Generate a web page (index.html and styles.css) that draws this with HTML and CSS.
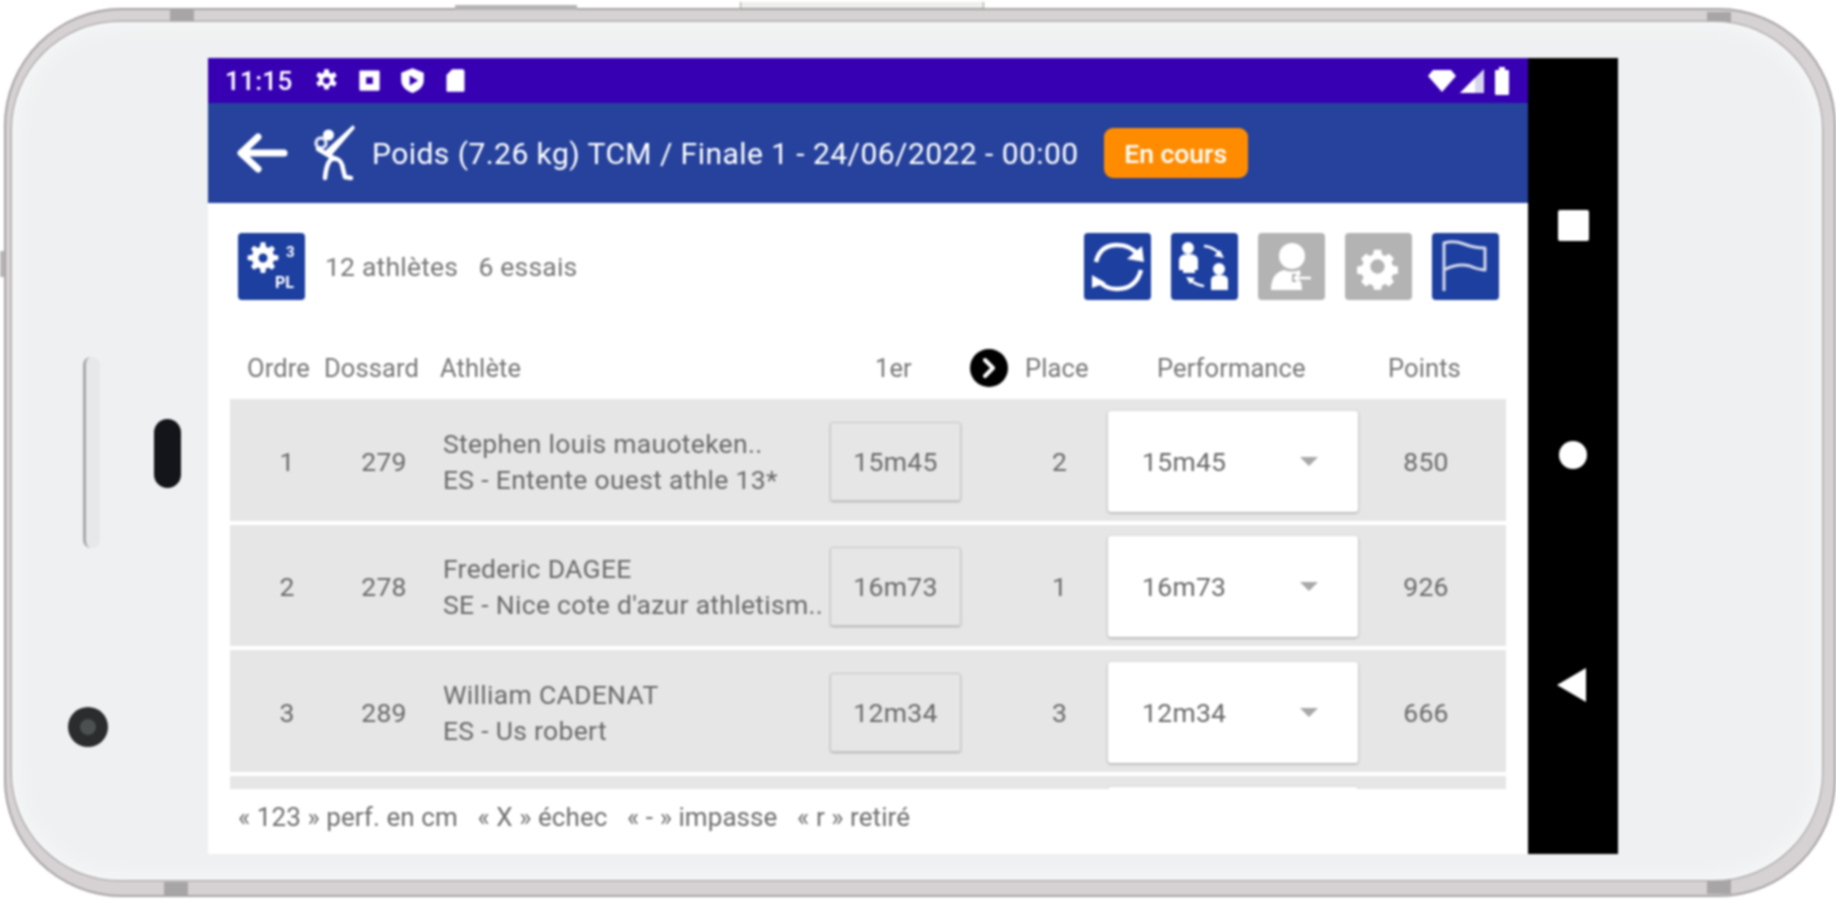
FILE: index.html
```html
<!DOCTYPE html>
<html lang="fr">
<head>
<meta charset="utf-8">
<title>Poids (7.26 kg) TCM</title>
<link rel="stylesheet" href="styles.css">
</head>
<body>
<div class="phone">
  <span class="hw hw-top-a"></span><span class="hw hw-top-b"></span>
  <span class="tab tab-tl"></span><span class="tab tab-tr"></span><span class="tab tab-bl"></span><span class="tab tab-br"></span><span class="tab-side"></span>
  <div class="bezel">
    <span class="slit"></span><span class="pill"></span><span class="camera"><span class="lens"></span></span>
    <div class="screen">
      <div class="app">
        <div class="status">
          <span class="time">11:15</span>
          <div class="status-icons">
            <svg class="st" viewBox="0 0 24 24"><path fill="#fff" fill-rule="evenodd" d="M10 2h4l.5 3 2 1 2.600-1.500 2 3.500-2.400 1.800v2.400l2.400 1.800-2 3.500-2.600-1.500-2 1-.5 3h-4l-.5-3-2-1-2.600 1.500-2-3.500 2.400-1.800v-2.400L2.900 8l2-3.500L7.500 6l2-1zM12 9a3 3 0 1 0 0 6 3 3 0 0 0 0-6z"/></svg>
            <svg class="st" viewBox="0 0 24 24"><path fill="#fff" fill-rule="evenodd" d="M4 3h16a1 1 0 0 1 1 1v16a1 1 0 0 1-1 1H4a1 1 0 0 1-1-1V4a1 1 0 0 1 1-1zm5 6v6h6V9z"/></svg>
            <svg class="st" viewBox="0 0 24 24"><path fill="#fff" fill-rule="evenodd" d="M12 1l10 4v7c0 5-4 9-10 11C6 21 2 17 2 12V5zM9.500 7.500v9L17 12z"/></svg>
            <svg class="st" viewBox="0 0 24 24"><path fill="#fff" d="M9 2h9a2 2 0 0 1 2 2v17a1 1 0 0 1-1 1H5a1 1 0 0 1-1-1V7z"/></svg>
          </div>
          <div class="status-right">
            <svg class="sr-wifi" viewBox="0 0 28 22"><path fill="#fff" d="M5 0h18l5 6L14 22 0 6z"/></svg>
            <svg class="sr-signal" viewBox="0 0 26 26"><path fill="#d9d5ee" d="M25 1v24H1z"/><path fill="#fff" d="M16 10v15H1z"/></svg>
            <svg class="sr-batt" viewBox="0 0 16 28"><path fill="#fff" d="M5 0h6v3h3a1 1 0 0 1 1 1v23a1 1 0 0 1-1 1H2a1 1 0 0 1-1-1V4a1 1 0 0 1 1-1h3z"/></svg>
          </div>
        </div>
        <div class="appbar">
          <svg class="back" viewBox="0 0 54 42"><path fill="none" stroke="#fff" stroke-width="7" stroke-linecap="round" stroke-linejoin="round" d="M49 21H7M23 5L6 21l17 16"/></svg>
          <svg class="thrower" viewBox="0 0 70 70"><circle cx="21" cy="23" r="5" fill="none" stroke="#dfe3f0" stroke-width="3.500"/><circle cx="28.500" cy="15" r="5.500" fill="#fff"/><path fill="#fff" d="M53 5l2 3-24 28-7-4z"/><g fill="none" stroke="#fff" stroke-linecap="round" stroke-linejoin="round"><path stroke-width="4.500" d="M18 29l17 10"/><path stroke-width="4.500" d="M25 58q1-11 4-16 3-5 8-3 5 2 6 10l2 8 6 1"/></g></svg>
          <h1 class="title">Poids (7.26 kg) TCM / Finale 1 - 24/06/2022 - 00:00</h1>
          <span class="badge">En cours</span>
        </div>
        <div class="toolbar">
          <button class="tbtn" type="button">
            <svg viewBox="0 0 67 67"><path fill="#fff" fill-rule="evenodd" transform="translate(6.250 4.750) scale(.75)" d="M22 6h6l1 6 3 1.500 5-3 4 4-3 5 1.500 3 6 1v6l-6 1-1.500 3 3 5-4 4-5-3-3 1.500-1 6h-6l-1-6-3-1.500-5 3-4-4 3-5-1.500-3-6-1v-6l6-1 1.500-3-3-5 4-4 5 3 3-1.500zm3 15a6 6 0 1 0 0 12 6 6 0 0 0 0-12z"/><text x="48" y="24" class="pl3">3</text><text x="37" y="55" class="plt">PL</text></svg>
          </button>
          <span class="counts">12 athlètes&nbsp;&nbsp; 6 essais</span>
          <div class="actions">
            <button class="tbtn" type="button"><svg viewBox="0 0 67 67"><g fill="none" stroke="#fff" stroke-width="4.500"><path d="M12 29Q16 12 33 12q14 0 21 10"/><path d="M57 37Q52 56 33 56q-12 0-18-8"/></g><path fill="#fff" d="M58 13l2 16-17-3zM8 42v13l14-5z"/></svg></button>
            <button class="tbtn" type="button"><svg viewBox="0 0 67 67"><g fill="#fff"><circle cx="17" cy="15" r="6"/><path d="M8 37V27q0-6 9.500-6T27 27v10h-3v3H12v-3z"/><circle cx="48" cy="36" r="6"/><path d="M40 57V47q0-5 8.500-5t8.500 5v10z"/></g><g fill="none" stroke="#fff" stroke-width="2.500"><path d="M33 13q9 1 15 7"/><path d="M19 47q6 5 14 6"/></g><path fill="#fff" d="M53 25l-10-2 6-6zM15 44l9 1-5 6z"/></svg></button>
            <button class="tbtn off" type="button"><svg viewBox="0 0 67 67"><g fill="#fff"><circle cx="34" cy="23" r="13"/><path d="M13 57q0-17 13-20 8 3 16 0l2 20z"/></g><path fill="none" stroke="#b3b3b3" stroke-width="8" d="M34 45h22"/><path fill="none" stroke="#fff" stroke-width="2.500" d="M37 45h16M42 40l-5 5 5 5"/></svg></button>
            <button class="tbtn off" type="button"><svg viewBox="0 0 67 67"><path fill="#fff" fill-rule="evenodd" d="M29 13h9l1 6 4 2 5-3 6 6-3 5 2 4 6 1v9l-6 1-2 4 3 5-6 6-5-3-4 2-1 5h-9l-1-5-4-2-5 3-6-6 3-5-2-4-6-1v-9l6-1 2-4-3-5 6-6 5 3 4-2zm4.500 12a9 9 0 1 0 0 18 9 9 0 0 0 0-18z" transform="translate(5.700 6.300) scale(.8)"/></svg></button>
            <button class="tbtn" type="button"><svg viewBox="0 0 67 67"><path fill="none" stroke="#d4d8ea" stroke-width="3" stroke-linejoin="round" d="M12 58V10q10-3 20 1t21 4v22q-9-1-15-4-13-3-26 4"/></svg></button>
          </div>
        </div>
        <div class="thead">
          <span>Ordre</span><span>Dossard</span><span>Athlète</span><span>1er</span>
          <span class="next"><svg viewBox="0 0 38 38"><circle cx="19" cy="19" r="19" fill="#000"/><path fill="none" stroke="#fff" stroke-width="4" stroke-linecap="round" stroke-linejoin="round" d="M15 11l8 8-8 8"/></svg></span>
          <span>Place</span><span>Performance</span><span>Points</span>
        </div>
        <div class="rows">
          <div class="row">
            <span class="num">1</span><span class="num">279</span>
            <div class="who"><span>Stephen louis mauoteken..</span><span>ES - Entente ouest athle 13*</span></div>
            <span class="try">15m45</span><span class="place">2</span>
            <div class="perf"><span>15m45</span><i class="caret"></i></div>
            <span class="pts">850</span>
          </div>
          <div class="row">
            <span class="num">2</span><span class="num">278</span>
            <div class="who"><span>Frederic DAGEE</span><span>SE - Nice cote d'azur athletism..</span></div>
            <span class="try">16m73</span><span class="place">1</span>
            <div class="perf"><span>16m73</span><i class="caret"></i></div>
            <span class="pts">926</span>
          </div>
          <div class="row">
            <span class="num">3</span><span class="num">289</span>
            <div class="who"><span>William CADENAT</span><span>ES - Us robert</span></div>
            <span class="try">12m34</span><span class="place">3</span>
            <div class="perf"><span>12m34</span><i class="caret"></i></div>
            <span class="pts">666</span>
          </div>
          <div class="row">
            <span></span><span></span><span></span><span></span><span></span>
            <div class="perf"></div>
            <span></span>
          </div>
        </div>
        <div class="legend">« 123 » perf. en cm&nbsp;&nbsp; « X » échec&nbsp;&nbsp; « - » impasse&nbsp;&nbsp; « r » retiré</div>
      </div>
      <div class="nav">
        <span class="nav-square"></span>
        <span class="nav-circle"></span>
        <svg class="nav-back" viewBox="0 0 30 34"><path fill="#fff" d="M0 17L29 0v34z"/></svg>
      </div>
    </div>
  </div>
</div>
</body>
</html>
```
FILE: styles.css
```css
* { box-sizing: border-box; }
html, body { margin: 0; height: 100%; overflow: hidden; background: #fff; }
body { font-family: Roboto, "Liberation Sans", sans-serif; color: #6a6a6a; }

.phone {
  position: relative;
  width: 1832px;
  height: 889px;
  margin: 8px 0 0 4px;
  padding: 14px 14px 17px 8px;
  border-radius: 118px;
  background: #d6d2d4;
  box-shadow: inset 0 0 0 2px #a9a4a7;
  filter: blur(0.8px);
}
.bezel {
  position: relative;
  height: 100%;
  padding: 36px 202px 26px 196px;
  border-radius: 108px;
  background: #eef0f1;
  box-shadow: 0 0 0 1.5px #b3afb1, inset 0 0 24px #fafafa;
}
.hw { position: absolute; height: 5px; }
.hw-top-a { left: 451px; top: -3px; width: 122px; background: #b5b3b3; }
.hw-top-b { left: 736px; top: -6px; width: 244px; height: 7px; background: #efefec; border: 1px solid #9c9c9c; border-top: 0; }
.tab { position: absolute; width: 24px; height: 14px; background: #a8a5a6; }
.tab-tl { left: 166px; top: 2px; }
.tab-tr { left: 1703px; top: 4px; }
.tab-bl { left: 160px; bottom: 1px; }
.tab-br { left: 1703px; bottom: 3px; }
.tab-side { position: absolute; left: -4px; top: 243px; width: 4px; height: 26px; background: #b9b5b7; }

.slit { position: absolute; left: 71px; top: 335px; width: 17px; height: 191px; border-left: 3px solid #a6a9ac; border-radius: 8px; background: #e6e8ea; }
.pill { position: absolute; left: 142px; top: 397px; width: 27px; height: 69px; border-radius: 14px; background: #14151a; }
.camera { position: absolute; left: 56px; top: 685px; width: 40px; height: 40px; border-radius: 50%; background: #2a2c2e; display: flex; align-items: center; justify-content: center; }
.lens { width: 16px; height: 16px; border-radius: 50%; background: #4c5050; }

.screen { display: flex; height: 100%; }
.app { flex: 0 0 1320px; display: flex; flex-direction: column; background: #fff; }
.nav { flex: 0 0 90px; background: #000; display: flex; flex-direction: column; align-items: center; }
.nav-square { width: 31px; height: 31px; margin-top: 152px; background: #fff; border-radius: 2px; }
.nav-circle { width: 28px; height: 28px; margin-top: 200px; background: #fff; border-radius: 50%; }
.nav-back { width: 30px; height: 34px; margin-top: 199px; margin-right: 3px; }

.status { flex: 0 0 45px; display: flex; align-items: center; padding: 0 18px 0 17px; background: #3700b3; color: #fff; }
.time { width: 88px; font-size: 26px; font-weight: 500; letter-spacing: .3px; }
.status-icons { display: flex; gap: 16px; }
.st { width: 27px; height: 27px; }
.status-right { margin-left: auto; display: flex; align-items: center; gap: 3px; }
.sr-wifi { width: 28px; height: 22px; }
.sr-signal { width: 26px; height: 26px; }
.sr-batt { width: 16px; height: 28px; margin-left: 6px; }

.appbar { flex: 0 0 100px; display: flex; align-items: center; padding-left: 27px; background: #26429c; color: #fff; }
.back { width: 54px; height: 42px; }
.thrower { width: 70px; height: 70px; margin: 4px 0 0 11px; }
.title { margin: 0 0 0 2px; font-size: 30px; font-weight: 400; letter-spacing: .45px; white-space: nowrap; }
.badge { margin-left: 25px; width: 144px; height: 50px; display: flex; align-items: center; justify-content: center; border-radius: 9px; background: #ff8c00; font-size: 26.500px; font-weight: 500; }

.toolbar { display: flex; align-items: center; padding: 30px 29px 0 30px; }
.tbtn { width: 67px; height: 67px; padding: 0; border: 0; border-radius: 4px; background: #1d3f9f; display: block; }
.tbtn svg { display: block; width: 67px; height: 67px; }
.tbtn.off { background: #b3b3b3; }
.pl3 { font-family: Roboto, sans-serif; font-size: 15px; font-weight: 700; fill: #fff; }
.plt { font-family: Roboto, sans-serif; font-size: 16px; font-weight: 700; fill: #fff; }
.counts { margin-left: 20px; font-size: 26.500px; letter-spacing: .2px; color: #777; white-space: nowrap; }
.actions { margin-left: auto; display: flex; gap: 20px; }

.thead { flex: 0 0 99px; display: grid; grid-template-columns: 94px 116px 435px 95px 55px 132px 231px 1fr; align-items: center; margin: 0 22px; padding-top: 37px; font-size: 25.500px; letter-spacing: .1px; color: #777; white-space: nowrap; }
.thead span:first-child { padding-left: 17px; }
.next { display: block; width: 38px; height: 38px; }
.next svg { display: block; width: 38px; height: 38px; }

.rows { flex: 1; min-height: 0; overflow: hidden; margin: 0 22px; display: flex; flex-direction: column; gap: 4px; }
.row { flex: 0 0 121.500px; display: grid; grid-template-columns: 114px 80px 406px 131px 147px 250px 148px; align-items: center; padding-top: 3px; background: #e6e6e6; font-size: 26.500px; letter-spacing: .3px; }
.num { text-align: center; }
.who { display: flex; flex-direction: column; gap: 9px; padding-left: 19px; white-space: nowrap; line-height: 27px; }
.try { height: 79px; display: flex; align-items: center; justify-content: center; border: 1px solid #c8c8c8; border-radius: 3px; box-shadow: 0 1px 2px rgba(0,0,0,.25); }
.place { padding-left: 50px; text-align: center; }
.perf { height: 101px; display: flex; align-items: center; justify-content: space-between; padding: 0 40px 0 34px; background: #fff; border-radius: 3px; box-shadow: 0 1px 3px rgba(0,0,0,.3); }
.caret { width: 0; height: 0; border-left: 9px solid transparent; border-right: 9px solid transparent; border-top: 9px solid #a8a8a8; }
.pts { padding-right: 12px; text-align: center; }

.legend { flex: 0 0 65px; display: flex; align-items: center; padding: 0 0 9px 30px; font-size: 26px; letter-spacing: .08px; color: #6f6f6f; white-space: nowrap; }
```
